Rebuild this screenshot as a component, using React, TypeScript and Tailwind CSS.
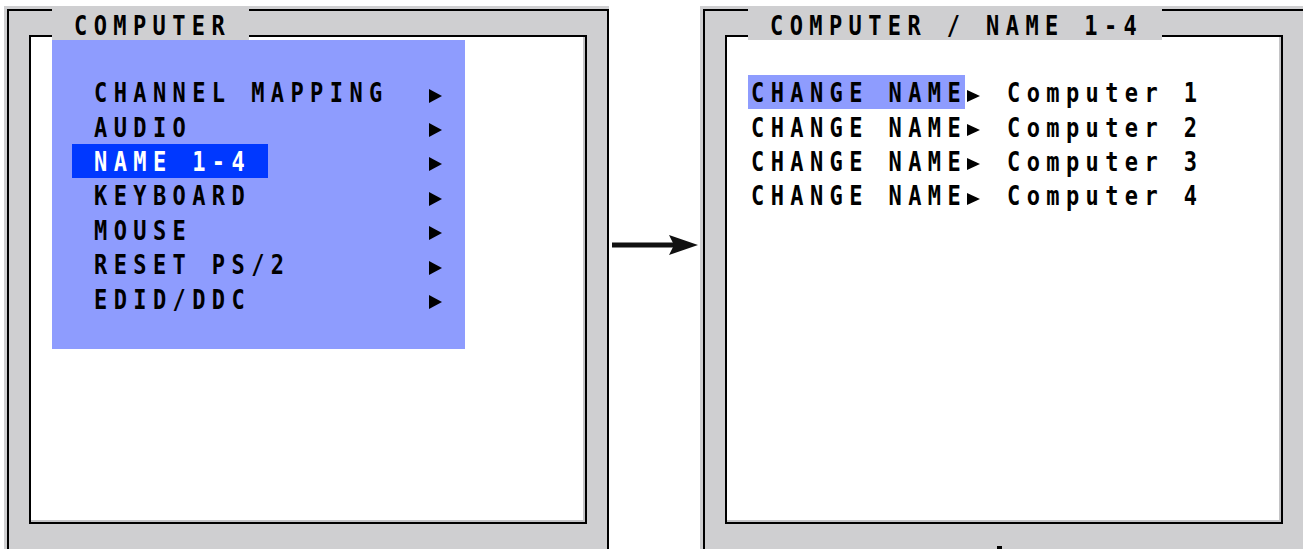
import type { ReactNode } from "react"

const menu = [
  "CHANNEL MAPPING",
  "AUDIO",
  "NAME 1-4",
  "KEYBOARD",
  "MOUSE",
  "RESET PS/2",
  "EDID/DDC",
]

const names = ["Computer 1", "Computer 2", "Computer 3", "Computer 4"]

function Mono({ children, className = "" }: { children: ReactNode; className?: string }) {
  return (
    <span
      className={
        "inline-block origin-center translate-y-[2px] scale-y-[1.2] whitespace-pre font-['DejaVu_Sans_Mono',monospace] text-[22px] font-bold leading-none tracking-[6.4px] " +
        className
      }
    >
      {children}
    </span>
  )
}

function Tri({ small = false }: { small?: boolean }) {
  return small ? (
    <svg width="13" height="12" viewBox="0 0 13 12" className="mt-[7px] shrink-0">
      <polygon points="0,0 13,6 0,12" fill="#000" />
    </svg>
  ) : (
    <svg width="13" height="14" viewBox="0 0 13 14" className="mt-[7px] shrink-0">
      <polygon points="0,0 13,7 0,14" fill="#000" />
    </svg>
  )
}

function Panel({
  title,
  tabClass,
  children,
  mark = false,
}: {
  title: string
  tabClass: string
  children: ReactNode
  mark?: boolean
}) {
  return (
    <div className="relative h-[560px] w-[605px] shrink-0 bg-[#cfcfd1] pl-[3px] pt-[3px]">
      <div className="h-full border-x-2 border-t-2 border-black pl-[20px] pt-[24px]">
        <div className="h-[489px] w-[558px] border-2 border-black bg-white shadow-[inset_-2px_-2px_0_#c4c4c6]">
          {children}
        </div>
      </div>

      {/* title tab sits over both frame lines */}
      <div className={"absolute left-[48px] top-0 flex h-[34px] items-center bg-[#cfcfd1] pl-[22px] pt-[3px] " + tabClass}>
        <Mono className="text-black">{title}</Mono>
      </div>

      {mark && <div className="absolute left-[297px] top-[540px] h-[4px] w-[5px] bg-black" />}
    </div>
  )
}

export default function App() {
  return (
    <div className="flex h-[549px] w-[1303px] items-start overflow-hidden bg-white pl-[4px] pt-[6px]">
      {/* Computer menu */}
      <Panel title="COMPUTER" tabClass="w-[197px]">
        <div className="ml-[21px] mt-[3px] h-[309px] w-[413px] bg-[#8e9cfe] pl-[20px] pt-[35px]">
          {menu.map((item) => {
            const selected = item === "NAME 1-4"
            return (
              <div key={item} className="flex h-[34.4px] items-center">
                <div className="h-full w-[357px]">
                  <div
                    className={
                      selected
                        ? "flex h-full w-[196px] items-center bg-[#0038ff] pl-[22px]"
                        : "flex h-full items-center pl-[22px]"
                    }
                  >
                    <Mono className={selected ? "text-white" : "text-black"}>{item}</Mono>
                  </div>
                </div>
                <Tri />
              </div>
            )
          })}
        </div>
      </Panel>

      {/* arrow */}
      <div className="w-[91px] shrink-0 pt-[229px]">
        <svg width="86" height="20" viewBox="0 0 86 20" className="ml-[3px]">
          <rect x="0" y="7.5" width="62" height="5" fill="#111" />
          <polygon points="57,0 86,10 57,20 62,10" fill="#111" />
        </svg>
      </div>

      {/* Name 1-4 */}
      <Panel title="COMPUTER / NAME 1-4" tabClass="w-[414px]" mark>
        <div className="ml-[21px] pt-[38px]">
          {names.map((n, i) => (
            <div key={n} className="flex h-[34.4px] items-center">
              <div
                className={
                  i === 0
                    ? "flex h-full w-[217px] items-center bg-[#8e9cfe] pl-[3px]"
                    : "flex h-full w-[217px] items-center pl-[3px]"
                }
              >
                <Mono className="text-black">CHANGE NAME</Mono>
              </div>
              <div className="ml-[2px] flex">
                <Tri small />
              </div>
              <Mono className="ml-[27px] text-black">{n}</Mono>
            </div>
          ))}
        </div>
      </Panel>
    </div>
  )
}
